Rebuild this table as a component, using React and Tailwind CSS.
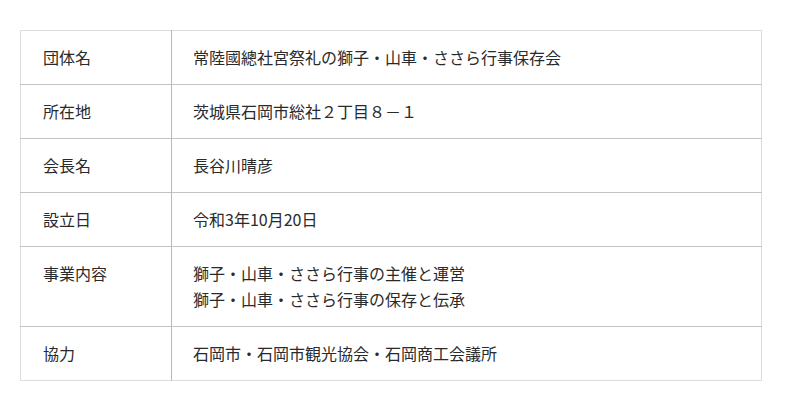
const rows = [
  { label: '団体名', value: ['常陸國總社宮祭礼の獅子・山車・ささら行事保存会'] },
  { label: '所在地', value: ['茨城県石岡市総社２丁目８－１'] },
  { label: '会長名', value: ['長谷川晴彦'] },
  { label: '設立日', value: ['令和3年10月20日'] },
  { label: '事業内容', value: ['獅子・山車・ささら行事の主催と運営', '獅子・山車・ささら行事の保存と伝承'] },
  { label: '協力', value: ['石岡市・石岡市観光協会・石岡商工会議所'] },
];

export default function App() {
  return (
    <div className="w-[800px] h-[410px] bg-white pt-[30px] pl-[20px] font-['Noto_Sans_CJK_JP','Noto_Sans',sans-serif] text-[16px] leading-[26px] text-[#2a2a2a]">
      <table className="w-[742px] border-collapse border border-[#dcdcdc]">
        <tbody>
          {rows.map((r, i) => (
            <tr key={i} className={i < rows.length - 1 ? 'border-b border-[#c4c4c4]' : ''}>
              <td className="w-[151px] pl-[22px] pt-[13px] pb-[14px] align-top border-r border-[#b8b8b8]">{r.label}</td>
              <td className="pl-[21px] pt-[13px] pb-[14px] align-top">
                {r.value.map((v, j) => (
                  <div key={j}>{v}</div>
                ))}
              </td>
            </tr>
          ))}
        </tbody>
      </table>
    </div>
  );
}
